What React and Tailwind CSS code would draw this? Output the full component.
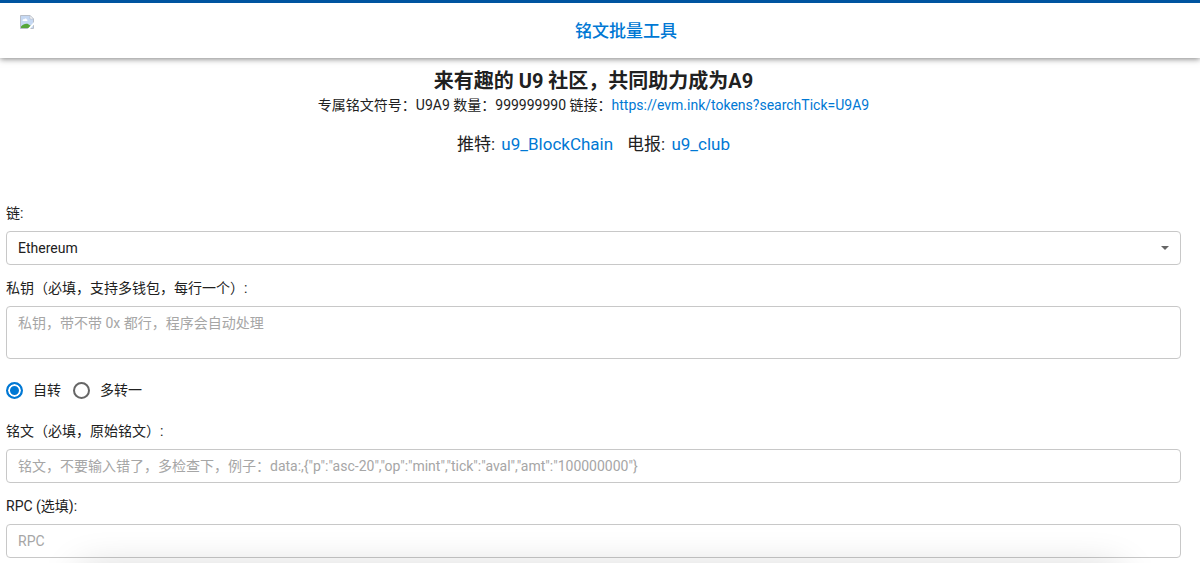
import { useState } from 'react';

const chains = ['Ethereum', 'BSC', 'Polygon', 'Avalanche'];

const fieldClass =
  'block w-full rounded border border-[#c8c8c8] bg-white px-[11px] text-sm text-[#212121] placeholder:text-[#a6a6a6] focus:outline-none focus:border-[#0078d4]';

function Logo() {
  return (
    <svg viewBox="0 0 14 14" className="size-[14px]" role="img" aria-label="logo">
      <path d="M0.5 0.5H10L13.5 4V13.5H0.5Z" fill="#c5d8f3" stroke="#b9bfc9" />
      <path d="M10 0.5V4H13.5Z" fill="#fff" stroke="#b9bfc9" strokeWidth="0.7" />
      <path d="M2.5 5.5C2.5 4.4 3.7 4.2 4.1 4.4C4.7 2.9 6.7 3.2 6.8 4.5C7.9 4.5 7.8 6 6.8 6H3C2.7 6 2.5 5.8 2.5 5.5Z" fill="#fff" />
      <path d="M1 13V11.5C3 9 5.5 8.3 7.5 8.8L11 11L9 13Z" fill="#55a63a" />
      <path d="M7.5 14L14 7V9.5L10 14Z" fill="#fff" />
    </svg>
  );
}

function Header() {
  return (
    <header className="flex h-[58px] border-t-[3px] border-[#0054a0] bg-white pl-5 shadow-[0_1px_6px_rgba(0,0,0,0.5)]">
      <div className="w-8 pt-3">
        <Logo />
      </div>
      <h1 className="flex-1 self-center text-center text-[17px] leading-6 font-medium text-[#0078d4]">
        铭文批量工具
      </h1>
    </header>
  );
}

function Intro() {
  return (
    <section className="pt-2 text-center">
      <h2 className="text-xl leading-[30px] font-bold">来有趣的 U9 社区，共同助力成为A9</h2>
      <p className="text-sm leading-[18px]">
        专属铭文符号：U9A9 数量：999999990 链接：
        <a href="https://evm.ink/tokens?searchTick=U9A9" className="text-[#0078d4]">
          https://evm.ink/tokens?searchTick=U9A9
        </a>
      </p>
      <p className="mt-4 flex justify-center gap-[14px] text-[17px] leading-7">
        <span>
          推特: <a href="https://twitter.com/u9_BlockChain" className="ml-0.5 text-[#0078d4]">u9_BlockChain</a>
        </span>
        <span>
          电报: <a href="https://t.me/u9_club" className="ml-0.5 text-[#0078d4]">u9_club</a>
        </span>
      </p>
    </section>
  );
}

function Field({ id, label, children }) {
  return (
    <div>
      <label htmlFor={id} className="mb-2 block text-sm leading-5">
        {label}
      </label>
      {children}
    </div>
  );
}

function Radio({ label, value, selected, onChange }) {
  return (
    <label className="flex items-center gap-[10px] text-sm leading-5">
      <input
        type="radio"
        name="mode"
        value={value}
        checked={selected === value}
        onChange={() => onChange(value)}
        className="size-[17px] appearance-none rounded-full border-2 border-[#666] bg-white checked:border-[#0078d4] checked:bg-[#0078d4] checked:shadow-[inset_0_0_0_2px_white]"
      />
      {label}
    </label>
  );
}

function App() {
  const [chain, setChain] = useState('Ethereum');
  const [mode, setMode] = useState('self');

  return (
    <div className="bg-white font-[Roboto,'Noto_Sans_CJK_SC',sans-serif] text-[#212121]">
      <Header />
      <main className="pr-[19px] pb-1.5 pl-1.5">
        <Intro />

        <form className="mt-[45px] flex flex-col gap-[13px]">
          <Field id="chain" label="链:">
            <div className="relative">
              <select
                id="chain"
                value={chain}
                onChange={(e) => setChain(e.target.value)}
                className={`${fieldClass} h-[34px] appearance-none`}
              >
                {chains.map((name) => (
                  <option key={name}>{name}</option>
                ))}
              </select>
              {/* Dropdown arrow */}
              <svg viewBox="0 0 8 4" className="pointer-events-none absolute top-[15px] right-3 h-1 w-2">
                <path d="M0 0H8L4 4Z" fill="#666" />
              </svg>
            </div>
          </Field>

          <Field id="keys" label="私钥（必填，支持多钱包，每行一个）:">
            <textarea
              id="keys"
              placeholder="私钥，带不带 0x 都行，程序会自动处理"
              className={`${fieldClass} h-[53px] resize-none py-1.5 leading-5`}
            />
          </Field>

          <div className="my-2 flex gap-3">
            <Radio label="自转" value="self" selected={mode} onChange={setMode} />
            <Radio label="多转一" value="merge" selected={mode} onChange={setMode} />
          </div>

          <Field id="inscription" label="铭文（必填，原始铭文）:">
            <input
              id="inscription"
              type="text"
              placeholder={'铭文，不要输入错了，多检查下，例子：data:,{"p":"asc-20","op":"mint","tick":"aval","amt":"100000000"}'}
              className={`${fieldClass} h-[34px]`}
            />
          </Field>

          <Field id="rpc" label="RPC (选填):">
            <input id="rpc" type="text" placeholder="RPC" className={`${fieldClass} h-[34px]`} />
          </Field>
        </form>
      </main>

      {/* Shade along the bottom edge */}
      <div className="pointer-events-none fixed inset-x-20 -bottom-12 h-10 shadow-[0_0_40px_rgba(0,0,0,0.2)]" />
    </div>
  );
}

export default App;
